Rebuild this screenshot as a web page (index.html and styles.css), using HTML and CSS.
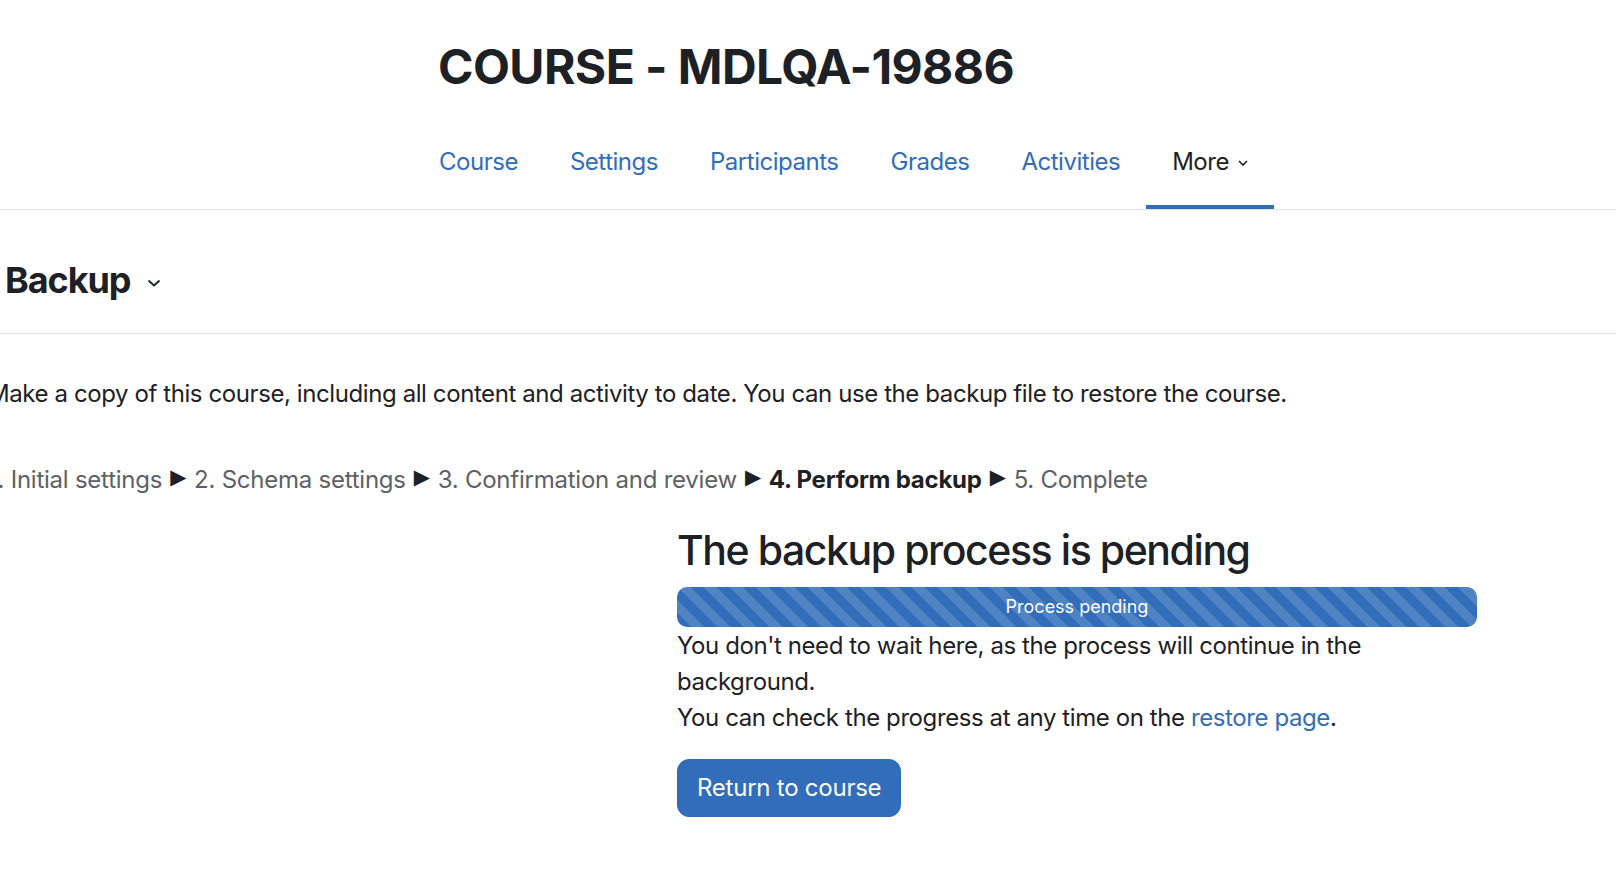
FILE: index.html
```html
<!DOCTYPE html>
<html lang="en">
<head>
  <meta charset="UTF-8">
  <meta name="viewport" content="width=device-width, initial-scale=1.0">
  <title>Backup - COURSE - MDLQA-19886</title>
  <link rel="stylesheet" href="styles.css">
</head>
<body>
  <!-- Course header -->
  <header class="page-header">
    <h1 class="course-title">COURSE - MDLQA-19886</h1>
  </header>

  <!-- Secondary navigation -->
  <nav class="secondary-nav">
    <ul class="nav-list">
      <li><a class="nav-link" href="#">Course</a></li>
      <li><a class="nav-link" href="#">Settings</a></li>
      <li><a class="nav-link" href="#">Participants</a></li>
      <li><a class="nav-link" href="#">Grades</a></li>
      <li><a class="nav-link" href="#">Activities</a></li>
      <li>
        <a class="nav-link active" href="#">More
          <svg class="nav-caret" width="10" height="6" viewBox="0 0 10 6"><polyline points="1,1 5,5 9,1" fill="none" stroke="#1d2125" stroke-width="1.6"/></svg>
        </a>
      </li>
    </ul>
  </nav>

  <!-- Tertiary header -->
  <div class="tertiary-header">
    <h2 class="page-heading">Backup</h2>
    <svg class="heading-caret" width="14" height="8" viewBox="0 0 14 8"><polyline points="1.5,1.5 7,6.5 12.5,1.5" fill="none" stroke="#1d2125" stroke-width="1.8"/></svg>
  </div>

  <main class="content">
    <p class="intro">Make a copy of this course, including all content and activity to date. You can use the backup file to restore the course.</p>

    <div class="backup-stages">
      <span class="stage">1. Initial settings</span>
      <span class="arrow">&#9654;</span>
      <span class="stage">2. Schema settings</span>
      <span class="arrow">&#9654;</span>
      <span class="stage">3. Confirmation and review</span>
      <span class="arrow">&#9654;</span>
      <span class="stage current">4. Perform backup</span>
      <span class="arrow">&#9654;</span>
      <span class="stage">5. Complete</span>
    </div>

    <!-- Pending process -->
    <section class="progress-panel">
      <h3 class="progress-title">The backup process is pending</h3>
      <div class="progress">
        <div class="progress-bar">Process pending</div>
      </div>
      <p class="progress-text">You don't need to wait here, as the process will continue in the background.<br>
        You can check the progress at any time on the <a href="#">restore page</a>.</p>
      <button class="btn-primary">Return to course</button>
    </section>
  </main>
</body>
</html>
```

FILE: styles.css
```css
/* General Page Styling */
body {
  margin: 0;
  font-family: Inter, "Noto Sans", sans-serif;
  font-size: 24px;
  line-height: 1.5;
  letter-spacing: -0.017em;
  color: #1d2125;
  background: #ffffff;
  overflow: hidden;
}

a {
  color: #316db9;
  text-decoration: none;
}

/* Header */
.page-header {
  padding-left: 438px;
}

.course-title {
  margin: 38px 0 0;
  font-size: 48px;
  font-weight: 700;
  line-height: 1.2;
  letter-spacing: -0.012em;
}

/* Secondary navigation */
.secondary-nav {
  border-bottom: 1px solid #dee2e6;
}

.nav-list {
  display: flex;
  list-style: none;
  margin: 34px 0 0;
  padding: 0 0 0 413px;
  letter-spacing: -0.02em;
}

.nav-link {
  display: flex;
  align-items: center;
  gap: 9px;
  padding: 14px 26px 25px;
  border-bottom: 4px solid transparent;
}

.nav-link.active {
  color: #1d2125;
  border-bottom-color: #316db9;
}

.nav-caret {
  margin-top: 2px;
}

/* Tertiary header */
.tertiary-header {
  display: flex;
  align-items: center;
  gap: 17px;
  padding: 49px 0 31px 5px;
  border-bottom: 1px solid #dee2e6;
}

.page-heading {
  margin: 0;
  font-size: 36px;
  font-weight: 700;
  line-height: 1.2;
  letter-spacing: -0.03em;
}

.heading-caret {
  margin-top: 6px;
}

/* Content */
.content {
  margin-left: -12px;
}

.intro {
  margin: 42px 0 50px;
}

.backup-stages {
  display: flex;
  gap: 8px;
  color: #5d6166;
  letter-spacing: -0.01em;
}

.backup-stages .arrow {
  color: #1d2125;
  font-size: 21px;
  font-family: "DejaVu Sans", sans-serif;
}

.backup-stages .current {
  color: #1d2125;
  font-weight: 700;
}

/* Progress panel */
.progress-panel {
  margin: 27px 0 0 689px;
  width: 800px;
}

.progress-title {
  margin: 0 0 12px;
  font-size: 41px;
  font-weight: 500;
  line-height: 1.22;
  letter-spacing: -0.035em;
}

.progress {
  height: 40px;
  border-radius: 10px;
  overflow: hidden;
  background: #e9ecef;
}

.progress-bar {
  height: 100%;
  display: flex;
  align-items: center;
  justify-content: center;
  font-size: 18px;
  letter-spacing: 0;
  color: #ffffff;
  background-color: #316db9;
  background-image: linear-gradient(45deg, rgba(255, 255, 255, 0.15) 25%, transparent 25%, transparent 50%, rgba(255, 255, 255, 0.15) 50%, rgba(255, 255, 255, 0.15) 75%, transparent 75%, transparent);
  background-size: 26px 26px;
}

.progress-text {
  margin: 1px 0 0;
}

.btn-primary {
  margin-top: 23px;
  padding: 10px 19px;
  font-family: inherit;
  font-size: 24px;
  line-height: 1.5;
  letter-spacing: -0.01em;
  color: #ffffff;
  background-color: #316db9;
  border: 1px solid #316db9;
  border-radius: 12px;
  cursor: pointer;
}
```
